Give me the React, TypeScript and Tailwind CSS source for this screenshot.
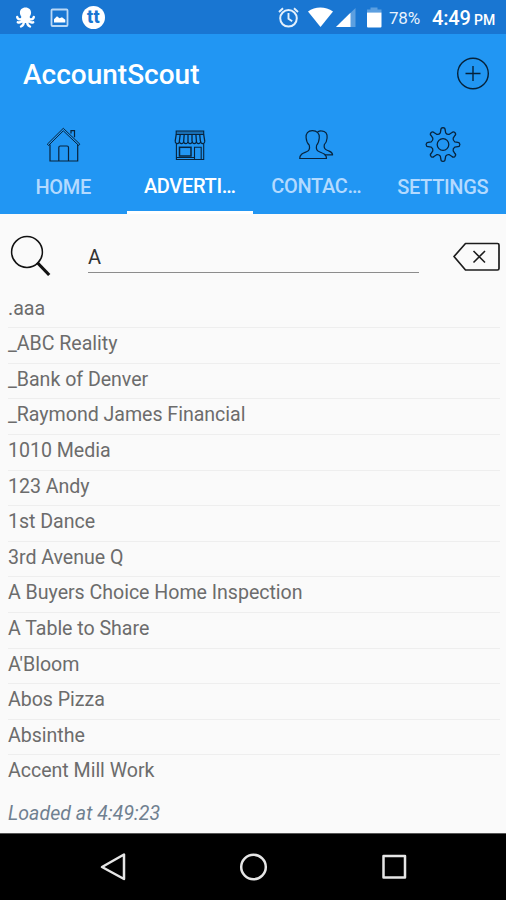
const GEAR = (() => {
  const cx = 443.5;
  const cy = 144.5;
  const pt = (r: number, deg: number) => {
    const a = (deg * Math.PI) / 180;
    return `${(cx + r * Math.cos(a)).toFixed(2)} ${(cy + r * Math.sin(a)).toFixed(2)}`;
  };
  let d = `M${pt(12, -13)}`;
  for (let i = 0; i < 8; i++) {
    const a = i * 45;
    d += `L${pt(15, a - 8)}Q${pt(16.8, a - 7.5)} ${pt(16.9, a)}Q${pt(16.8, a + 7.5)} ${pt(15, a + 8)}L${pt(12, a + 13)}Q${pt(10.5, a + 22.5)} ${pt(12, a + 32)}`;
  }
  return d + "Z";
})();

const ROWS = [
  ".aaa",
  "_ABC Reality",
  "_Bank of Denver",
  "_Raymond James Financial",
  "1010 Media",
  "123 Andy",
  "1st Dance",
  "3rd Avenue Q",
  "A Buyers Choice Home Inspection",
  "A Table to Share",
  "A'Bloom",
  "Abos Pizza",
  "Absinthe",
  "Accent Mill Work",
];

function StatusBar() {
  return (
    <div className="flex h-[34px] items-center bg-[#1976d2] text-white">
      <svg className="ml-[15px] h-[34px] w-[22px]" viewBox="15 0 22 34" fill="none">
        <path d="M25.500 7.500c-3.600 0-5.600 2.300-5.600 5.200 0 2.200 1.300 3.500 2 5.500h7.200c.7-2 2-3.300 2-5.500C31.100 9.800 29.100 7.500 25.500 7.500Z" fill="#fff" />
        <path d="M22.500 18c-1 2-4.800 2-5.300-1M23 19c-.8 3-3 3.800-5.200 3.300M24.300 19c0 4-.8 6.500-3.300 7.500M28.500 18c1 2 4.800 2 5.300-1M28 19c.8 3 3 3.800 5.200 3.300M26.700 19c0 4 .8 6.500 3.300 7.500" stroke="#fff" strokeWidth="2.400" strokeLinecap="round" />
        <path d="M21.500 17h8l-1 6h-6Z" fill="#fff" />
      </svg>
      <svg className="ml-[12px] h-[34px] w-[20px]" viewBox="49 0 20 34" fill="none">
        <rect x="51.500" y="9.500" width="16" height="16.500" rx="1" stroke="#b9d8f6" strokeWidth="1.800" />
        <path d="M54 22.500v-3.200l3-3 2.500 2 2.500-1 3.300 2.500v2.700Z" fill="#fff" />
      </svg>
      <div className="ml-[13px] flex h-[23px] w-[23px] items-center justify-center rounded-full bg-white text-[18px] leading-none font-extrabold tracking-[0.300px] text-[#1976d2]">
        tt
      </div>
      <svg className="ml-[171px] h-[34px] w-[109px]" viewBox="276 0 109 34" fill="none">
        <circle cx="288.500" cy="18.300" r="8.300" stroke="#e3f0fc" strokeWidth="2" />
        <path d="M288.500 13v5.800l3.700 2.400M279 12l4-3.700M298 12l-4-3.700" stroke="#e3f0fc" strokeWidth="1.900" />
        <path d="M308 11.500c7-5.200 17.500-5.200 25 0L320.500 27Z" fill="#fff" />
        <path d="M336 27 355.500 8v19Z" fill="#5c9fe0" />
        <path d="M336 27 350.500 12.800V27Z" fill="#fff" />
        <path d="M367 12.500V9.500h3.500v-2h7v2h4v3Z" fill="#5c9fe0" />
        <path d="M367 12.500h14.500v14a1 1 0 0 1-1 1H368a1 1 0 0 1-1-1Z" fill="#fff" />
      </svg>
      <span className="ml-[4px] w-[43px] pt-[2px] text-[17px] leading-none tracking-[-0.200px] text-[#e8f2fc]">78%</span>
      <span className="w-[42px] pt-[2px] text-[20px] leading-none font-medium tracking-[-0.200px]">4:49</span>
      <span className="pt-[6px] text-[14px] leading-none font-medium">PM</span>
    </div>
  );
}

function HomeIcon() {
  return (
    <svg className="h-[40px] w-[40px]" viewBox="43.500 124 40 40" fill="none" stroke="#08243d" strokeWidth="1.200">
      <path d="M47.800 144.200 63.800 128.300 80.400 144.200 79.200 145.500 63.800 130.800 49 145.500Z" strokeWidth="1" />
      <path d="M50.500 144.500V161h27.700V144.500M59.300 161V147.500q0-1.500 1.500-1.500h6.700q1.500 0 1.500 1.500V161M71.500 133.500v-2.800h3.500v6.500" />
    </svg>
  );
}

function ShopIcon() {
  return (
    <svg className="h-[40px] w-[40px]" viewBox="170.300 124 40 40" fill="none" stroke="#08243d" strokeWidth="1.100">
      <path d="M176.500 131h27.500v3.500h-27.500Z" fill="#08243d" fillOpacity="0.350" />
      <path d="M176.500 134.500l-1 6.500M204 134.500l1 6.500M180.500 134.500l-.8 6.500M184.500 134.500l-.5 6.500M188.300 134.500v6.500M192.300 134.500v6.500M196.200 134.500l.5 6.500M200 134.500l.7 6.500" strokeWidth="1.300" />
      <path d="M175.500 141a2.100 2.600 0 0 0 4.200 0 2.100 2.600 0 0 0 4.300 0 2.100 2.600 0 0 0 4.300 0 2.100 2.600 0 0 0 4.200 0 2.100 2.600 0 0 0 4.200 0 2.100 2.600 0 0 0 4.200 0 2.100 2.600 0 0 0 4.200 0" />
      <path d="M176.700 143.500V159.500H204V143.500M176.700 157.500h17.800M194.800 159.500V147.300h6.700V159.500" />
      <rect x="179.800" y="147.300" width="11.500" height="8.700" strokeWidth="1.500" />
    </svg>
  );
}

function ContactsIcon() {
  return (
    <svg className="h-[40px] w-[40px]" viewBox="296.800 124 40 40" fill="none" stroke="#08243d" strokeWidth="1.200" strokeLinejoin="round">
      <path d="M313.200 130.700c-4.500 0-6.700 2.800-6.300 7 .3 3.400 1 5.600 3.200 7.600.7 3-.2 5.400-2.800 6.500-3.500 1.400-6.600 2.200-6.800 6.700h26.800c-.2-4.500-3.600-5.300-7.100-6.700-2.600-1.100-3.500-3.500-2.800-6.500 1.900-2 2.400-4.200 2.700-7.600.4-4.200-2.400-7-6.900-7Z" />
      <path d="M318.300 132c1.300-.9 2.300-1.300 3.800-1.200 4.500.2 6.200 3 5.800 7.200-.3 3.400-1 5-2.800 6.600-.5 2.700.3 4.700 2.800 5.700 3 1.200 5.200 1.300 5.500 4.500h-8" />
    </svg>
  );
}

function SettingsIcon() {
  return (
    <svg className="h-[40px] w-[40px]" viewBox="423.500 124 40 40" fill="none" stroke="#08243d" strokeWidth="1.300" strokeLinejoin="round">
      <path d={GEAR} />
      <circle cx="443.500" cy="144.500" r="5.800" />
    </svg>
  );
}

export default function App() {
  return (
    <div className="flex h-[900px] w-[506px] flex-col overflow-hidden bg-[#fafafa] font-[Roboto,sans-serif]">
      <StatusBar />
      <header className="flex h-[180px] flex-col bg-[#2196f3]">
        <div className="flex h-[80px] items-center justify-between pr-[16px] pl-[23px]">
          <h1 className="pt-[2px] text-[28px] leading-none font-medium text-white">AccountScout</h1>
          <svg className="h-[34px] w-[34px]" viewBox="0 0 34 34" fill="none" stroke="#06223a" strokeWidth="1.400">
            <circle cx="17" cy="16.500" r="15.300" />
            <path d="M17 9v15M9.500 16.500h15" />
          </svg>
        </div>
        <nav className="grid flex-1 grid-cols-4 text-[20px] leading-none font-medium tracking-[-0.320px] text-[#b3daff]">
          <div className="flex flex-col items-center pt-[10px]">
            <HomeIcon />
            <span className="mt-[13px]">HOME</span>
          </div>
          <div className="flex flex-col items-center border-b-[3px] border-white pt-[10px] text-white">
            <ShopIcon />
            <span className="mt-[12px]">ADVERTI…</span>
          </div>
          <div className="flex flex-col items-center pt-[10px]">
            <ContactsIcon />
            <span className="mt-[12px]">CONTAC…</span>
          </div>
          <div className="flex flex-col items-center pt-[10px]">
            <SettingsIcon />
            <span className="mt-[13px]">SETTINGS</span>
          </div>
        </nav>
      </header>
      <div className="flex h-[78.500px] items-start">
        <svg className="mt-[20px] ml-[8px] h-[44px] w-[44px]" viewBox="8 234 44 44" fill="none" stroke="#111">
          <circle cx="27" cy="252" r="15.400" strokeWidth="1.500" />
          <path d="m37.200 262.500 12 12.500" strokeWidth="3.200" />
        </svg>
        <div className="mt-[32px] ml-[36px] h-[27px] w-[331px] border-b border-[#8c8c8c] text-[20px] leading-[22px] text-[#333]">A</div>
        <svg className="mt-[26px] ml-[33px] h-[32px] w-[50px]" viewBox="452 240 50 32" fill="none" stroke="#1c1c1c">
          <path d="M454 256.500 465.500 243.500H497.500q1.500 0 1.500 1.500V268.500q0 1.500-1.500 1.500H465.500Z" strokeWidth="1.700" strokeLinejoin="round" />
          <path d="m473.500 251 11.500 11.500M485 251l-11.500 11.500" strokeWidth="1.600" />
        </svg>
      </div>
      <ul className="mr-[6px] ml-[8px] flex flex-col">
        {ROWS.map((name, i) => (
          <li
            key={name}
            className={`h-[35.620px] text-[19.600px] leading-[31px] tracking-[-0.030px] whitespace-nowrap text-[#6c6c6c] ${i < ROWS.length - 1 ? "border-b border-[#eeeeee]" : ""}`}
          >
            {name}
          </li>
        ))}
      </ul>
      <div className="flex-1 pt-[7.500px] pl-[8px] text-[19.500px] leading-[30px] tracking-[0.060px] text-[#708090] italic">Loaded at 4:49:23</div>
      <div className="flex h-[67px] items-center justify-center border-t border-[#555] bg-black">
        <svg className="h-[30px] w-[310px]" viewBox="98 852 310 30" fill="none" stroke="#e6e6e6" strokeWidth="2.500" strokeLinejoin="round">
          <path d="M102 867 124 854.500V879Z" />
          <circle cx="253.500" cy="867" r="12.300" />
          <rect x="383.500" y="856" width="21.500" height="21.500" />
        </svg>
      </div>
    </div>
  );
}
